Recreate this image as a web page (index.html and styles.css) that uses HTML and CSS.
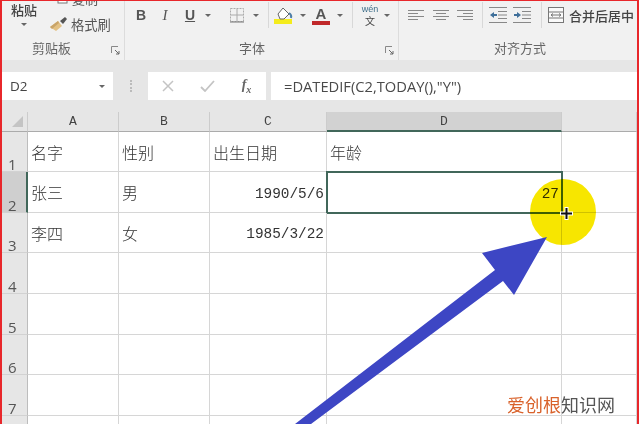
FILE: index.html
```html
<!DOCTYPE html>
<html lang="zh-CN">
<head>
<meta charset="utf-8">
<title>Excel DATEDIF</title>
<link rel="stylesheet" href="styles.css">
</head>
<body>
<div class="frame">
  <div class="app">
    <div class="ribbon">
      <section class="group group-clip">
        <div class="clip-tools">
          <div class="paste"><span>粘贴</span><i class="caret"></i></div>
          <div class="clip-side">
            <div class="copy"><svg width="11" height="11" viewBox="0 0 11 11"><rect x="1" y="1" width="9" height="9" fill="#fff" stroke="#777"/></svg><span>复制</span></div>
            <div class="brush">
              <svg width="18" height="17" viewBox="0 0 18 17"><path d="M0 11 L8 5 L12 10 L6 15 Z" fill="#e3c184"/><path d="M0 11 L8 5 L9 7 L2 13 Z" fill="#c9a469"/><path d="M10 5 L15 1 L17 3 L13 8 Z" fill="#555"/></svg>
              <span>格式刷</span>
            </div>
          </div>
        </div>
        <div class="label-row"><span class="label label-clip">剪贴板</span><svg class="launcher" width="9" height="9" viewBox="0 0 9 9"><path d="M0.5 7V0.5H7" fill="none" stroke="#888"/><path d="M4 4L8 8M8 5V8H5" fill="none" stroke="#666"/></svg></div>
      </section>
      <section class="group group-font">
        <div class="tools font-tools">
          <b class="t-b">B</b>
          <i class="t-i">I</i>
          <u class="t-u">U</u>
          <i class="caret"></i>
          <span></span>
          <svg width="16" height="16" viewBox="0 0 16 16"><rect x="1.5" y="1.5" width="13" height="13" fill="none" stroke="#aaa" stroke-dasharray="2 1"/><path d="M8 2V14M2 8H14" stroke="#aaa"/><path d="M1 15H15" stroke="#777"/></svg>
          <i class="caret"></i>
          <span class="sep"></span>
          <svg width="22" height="20" viewBox="0 0 22 20"><rect x="1" y="14" width="18" height="5" fill="#f4ec1c"/><path d="M5 9L10 3L16 9L11 14H7Z" fill="#fff" stroke="#666"/><path d="M16 8Q19 10 18 13" fill="none" stroke="#4f7fa8" stroke-width="2"/></svg>
          <i class="caret"></i>
          <span class="t-a">A</span>
          <i class="caret"></i>
          <span class="sep"></span>
          <span class="wen"><small>wén</small><em>文</em></span>
          <i class="caret"></i>
        </div>
        <div class="label-row"><span class="label label-font">字体</span><svg class="launcher" width="9" height="9" viewBox="0 0 9 9"><path d="M0.5 7V0.5H7" fill="none" stroke="#888"/><path d="M4 4L8 8M8 5V8H5" fill="none" stroke="#666"/></svg></div>
      </section>
      <section class="group group-align">
        <div class="tools align-tools">
          <svg width="16" height="13" viewBox="0 0 16 13"><path d="M0 1.5H16M0 4.5H10M0 7.5H16M0 10.5H10" stroke="#888"/></svg>
          <svg width="16" height="13" viewBox="0 0 16 13"><path d="M0 1.5H16M3 4.5H13M0 7.5H16M3 10.5H13" stroke="#888"/></svg>
          <svg width="16" height="13" viewBox="0 0 16 13"><path d="M0 1.5H16M6 4.5H16M0 7.5H16M6 10.5H16" stroke="#888"/></svg>
          <span class="sep"></span>
          <svg width="18" height="16" viewBox="0 0 18 16"><path d="M0 .5H18M0 15.5H18M9 4.5H18M9 8H18M9 11.5H18" stroke="#888"/><path d="M1 8L5 5V7H8V9H5V11Z" fill="#3f6f9a"/></svg>
          <svg width="18" height="16" viewBox="0 0 18 16"><path d="M0 .5H18M0 15.5H18M9 4.5H18M9 8H18M9 11.5H18" stroke="#888"/><path d="M8 8L4 5V7H1V9H4V11Z" fill="#3f6f9a"/></svg>
          <span class="sep"></span>
          <svg width="16" height="16" viewBox="0 0 16 16"><rect x=".5" y=".5" width="15" height="15" fill="#fafafa" stroke="#777"/><path d="M1 5H15M1 11H15M3 8H13M3 8L5 6.5M3 8L5 9.500M13 8L11 6.500M13 8L11 9.500" stroke="#777" fill="none"/></svg>
          <span class="merge">合并后居中</span>
        </div>
        <div class="label-row"><span class="label label-align">对齐方式</span></div>
      </section>
    </div>

    <div class="formula-zone">
      <div class="namebox"><span>D2</span><i class="caret"></i></div>
      <div class="grip"></div>
      <div class="fx-box">
        <svg width="12" height="12" viewBox="0 0 12 12"><path d="M1 1L11 11M11 1L1 11" stroke="#c4c4c4" stroke-width="1.500"/></svg>
        <svg width="15" height="12" viewBox="0 0 15 12"><path d="M1 7L5 11L14 1" fill="none" stroke="#c4c4c4" stroke-width="1.800"/></svg>
        <span class="fx">f<sub>x</sub></span>
      </div>
      <div class="formula">=DATEDIF(C2,TODAY(),"Y")</div>
    </div>

    <div class="sheet">
      <div class="hd corner"><span class="tri"></span></div>
      <div class="hd">A</div><div class="hd">B</div><div class="hd">C</div><div class="hd hd-active">D</div><div class="hd"></div>

      <div class="rh">1</div><div class="c">名字</div><div class="c">性别</div><div class="c">出生日期</div><div class="c">年龄</div><div class="c"></div>
      <div class="rh rh-active">2</div><div class="c">张三</div><div class="c">男</div><div class="c num">1990/5/6</div><div class="c num selected">27</div><div class="c"></div>
      <div class="rh">3</div><div class="c">李四</div><div class="c">女</div><div class="c num">1985/3/22</div><div class="c"></div><div class="c"></div>
      <div class="rh">4</div><div class="c"></div><div class="c"></div><div class="c"></div><div class="c"></div><div class="c"></div>
      <div class="rh">5</div><div class="c"></div><div class="c"></div><div class="c"></div><div class="c"></div><div class="c"></div>
      <div class="rh">6</div><div class="c"></div><div class="c"></div><div class="c"></div><div class="c"></div><div class="c"></div>
      <div class="rh">7</div><div class="c"></div><div class="c"></div><div class="c"></div><div class="c"></div><div class="c"></div>
      <div class="rh"></div><div class="c"></div><div class="c"></div><div class="c"></div><div class="c"></div><div class="c"></div>
    </div>
  </div>

  <div class="spot"></div>
  <svg class="overlay" width="640" height="424" viewBox="0 0 640 424">
    <polygon points="547,237 482,253 495,270 295,424 311,424 503,281 514,295" fill="#3d46c4"/>
    <path d="M566.500 207V220M560 213.500H573" stroke="#fff" stroke-width="4"/>
    <path d="M566.500 208V219M561 213.500H572" stroke="#111" stroke-width="2"/>
  </svg>
  <div class="watermark"><span class="wm-a">爱创根</span><span class="wm-b">知识网</span></div>
</div>
</body>
</html>
```
FILE: styles.css
```css
* { box-sizing: border-box; }
html, body { margin: 0; padding: 0; background: #fff; }
body { width: 640px; height: 424px; overflow: hidden; font-family: "Noto Sans CJK SC", "Noto Sans", sans-serif; color: #333; }

.frame { position: relative; width: 640px; height: 424px; overflow: hidden; }
.app {
  width: 639px; height: 424px; overflow: hidden;
  border-left: 2px solid #e8272b; border-top: 1px solid #e8272b; border-right: 2px solid #e8272b;
  filter: blur(0.5px);
  display: flex; flex-direction: column;
}

/* ribbon */
.ribbon { display: flex; height: 59px; flex: none; background: #f1f1f1; overflow: hidden; }
.group { display: flex; flex-direction: column; justify-content: space-between; border-right: 1px solid #dcdcdc; padding-bottom: 3px; }
.group-clip { width: 123px; }
.group-font { width: 274px; }
.group-align { flex: 1; border-right: 0; }
.label-row { display: flex; align-items: center; height: 18px; }
.label { font-size: 13px; line-height: 18px; color: #666; }
.label-clip { margin-left: 30px; }
.label-font { margin-left: 114px; }
.label-align { margin-left: 95px; }
.launcher { margin-left: auto; margin-right: 4px; margin-top: 4px; }

.clip-tools { display: flex; height: 36px; }
.paste { width: 44px; display: flex; flex-direction: column; align-items: center; font-size: 13px; line-height: 17px; font-weight: 500; color: #444; gap: 5px; }
.clip-side { display: flex; flex-direction: column; padding-left: 4px; }
.copy { display: flex; align-items: center; gap: 4px; height: 12px; margin: -9px 0 0 7px; font-size: 13px; color: #555; }
.brush { display: flex; align-items: center; gap: 3px; height: 20px; margin-top: 10px; font-size: 13.300px; color: #555; }

.caret { display: block; width: 0; height: 0; border-left: 3px solid transparent; border-right: 3px solid transparent; border-top: 3px solid #666; }

.tools { display: grid; align-items: center; justify-items: center; height: 28px; }
.font-tools { grid-template-columns: 24px 24px 26px 10px 16px 16px 22px 2px 30px 8px 28px 10px 14px 22px 12px; padding-left: 4px; }
.align-tools { grid-template-columns: 24px 26px 22px 12px 20px 28px 10px 20px 1fr; padding-left: 5px; }
.sep { display: block; width: 1px; height: 26px; background: #d8d8d8; }
.t-b, .t-i, .t-u { font-family: "Liberation Sans", sans-serif; font-size: 14px; line-height: 16px; color: #555; }
.t-i { font-family: "Liberation Serif", serif; font-size: 15px; }
.t-u { font-weight: 700; }
.t-a { display: block; font-family: "Liberation Sans", sans-serif; font-weight: 700; font-size: 15px; line-height: 15px; color: #555; border-bottom: 4px solid #c0282a; width: 18px; text-align: center; }
.wen { display: flex; flex-direction: column; align-items: center; gap: 1px; color: #3f6f8a; }
.wen small { display: block; height: 9px; font-family: "Liberation Sans", sans-serif; font-size: 9px; line-height: 8px; }
.wen em { display: block; height: 11px; font-style: normal; font-size: 10px; line-height: 11px; color: #444; }
.merge { justify-self: start; padding-left: 3px; font-size: 13px; font-weight: 500; color: #444; white-space: nowrap; }

/* formula bar */
.formula-zone { flex: none; display: flex; height: 52px; background: #e6e6e6; padding: 12px 0; }
.namebox { width: 111px; height: 28px; background: #fff; display: flex; align-items: center; justify-content: space-between; padding: 0 8px; font-family: "Open Sans", sans-serif; font-size: 13.500px; color: #444; }
.grip { width: 35px; height: 28px; position: relative; }
.grip::after { content: ""; position: absolute; left: 17px; top: 8px; height: 12px; border-left: 2px dotted #bbb; }
.fx-box { width: 118px; height: 28px; background: #fff; display: grid; grid-template-columns: 40px 39px 39px; align-items: center; justify-items: center; }
.fx { font-family: "Liberation Serif", serif; font-style: italic; font-weight: 700; font-size: 14px; color: #666; }
.fx sub { font-size: 10px; }
.formula { flex: 1; margin-left: 5px; height: 28px; line-height: 28px; background: #fff; padding-left: 13px; font-family: "Open Sans", sans-serif; font-size: 14.700px; color: #4a4a4a; }

/* sheet */
.sheet { flex: none; display: grid; grid-template-columns: 26px 91px 91px 117px 235px 75px; grid-template-rows: 20px 40px 41px 40px 41px 41px 40px 41px 41px; background: #fff; }
.hd { background: #e6e6e6; border-right: 1px solid #ccc; border-bottom: 1px solid #ababab; font-family: "Liberation Mono", monospace; font-size: 13px; line-height: 19px; text-align: center; color: #444; }
.hd-active { background: #d2d2d2; border-bottom: 2px solid #41675a; }
.corner { position: relative; }
.tri { position: absolute; right: 4px; bottom: 4px; width: 0; height: 0; border-left: 11px solid transparent; border-bottom: 11px solid #c4c4c4; }
.rh { background: #e6e6e6; border-right: 1px solid #bdbdbd; border-bottom: 1px solid #d2d2d2; display: flex; align-items: flex-end; padding: 0 0 0 6px; font-family: "Open Sans", sans-serif; font-size: 15px; line-height: 14px; color: #555; }
.rh-active { background: #cfcfcf; border-right: 2px solid #41675a; }
.c { border-right: 1px solid #d6d6d6; border-bottom: 1px solid #d6d6d6; padding: 0 2px 0 3px; display: flex; align-items: center; font-size: 16px; font-weight: 300; color: #333; white-space: nowrap; }
.num { justify-content: flex-end; padding-top: 3px; font-family: "Liberation Mono", monospace; font-size: 14.400px; }
.selected { outline: 2px solid #41675a; outline-offset: -1px; }

/* overlays */
.spot { position: absolute; left: 530px; top: 179px; width: 66px; height: 66px; border-radius: 50%; background: #f7e600; mix-blend-mode: multiply; filter: blur(0.6px); }
.overlay { position: absolute; left: 0; top: 0; }
.watermark { position: absolute; left: 507px; top: 391px; font-size: 18px; line-height: 26px; white-space: nowrap; }
.wm-a { color: #d9622b; }
.wm-b { color: #555; }
```
